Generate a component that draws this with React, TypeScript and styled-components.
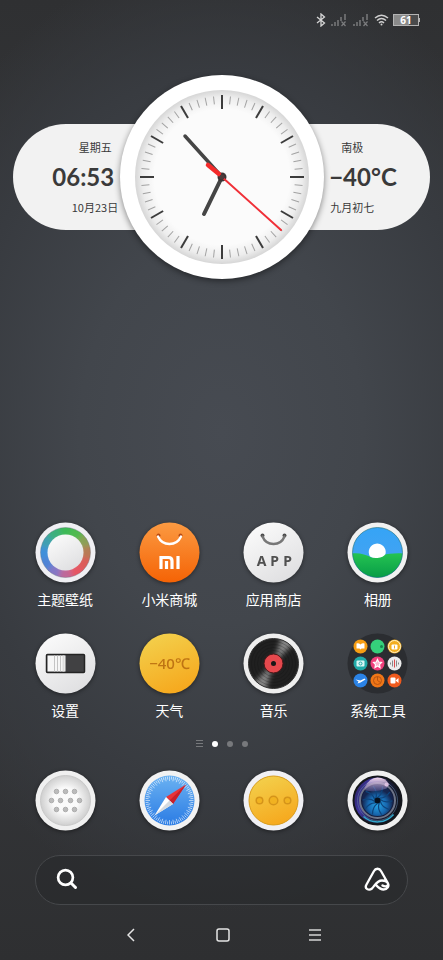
import React from 'react';
import styled, { createGlobalStyle } from 'styled-components';

const GlobalStyle = createGlobalStyle`
  * { box-sizing: border-box; }
  body {
    margin: 0;
    background: #2f3032;
    font-family: 'Noto Sans CJK SC', 'Noto Sans', sans-serif;
    color: #fff;
  }
  button, input { font: inherit; color: inherit; border: 0; padding: 0; margin: 0; background: none; }
  button { cursor: pointer; }
  svg { display: block; }
`;

const Screen = styled.main`
  min-height: 100vh;
  display: flex;
  flex-direction: column;
  background:
    radial-gradient(ellipse 80% 50% at 50% 45%, #474b52 0%, #42464c 40%, #383b40 75%, rgba(48, 49, 51, 0) 100%),
    linear-gradient(#2f3032 0%, #35373a 30%, #37393d 60%, #2e2f31 100%);
`;

const StatusBar = styled.header`
  height: 40px;
  padding: 0 23px;
  display: flex;
  align-items: center;
  justify-content: flex-end;
  gap: 4px;
`;

const Battery = styled.div`
  display: flex;
  align-items: center;
`;

const BatteryBody = styled.div`
  width: 26px;
  height: 12px;
  border: 1px solid #b4b4b4;
  background: linear-gradient(90deg, #8a8a8a 61%, #4a4b4c 61%);
  font: 700 10px/10px 'Open Sans', sans-serif;
  text-align: center;
`;

const BatteryTip = styled.div`
  width: 1px;
  height: 4px;
  background: #b4b4b4;
`;

const ClockWidget = styled.section`
  margin: 35px 13px 0;
  display: grid;
  align-items: center;
  justify-items: center;
  & > * { grid-area: 1 / 1; }
`;

const Pill = styled.div`
  width: 100%;
  height: 106px;
  padding-left: 6px;
  border-radius: 53px;
  background: #f2f2f2;
  color: #3a3a3a;
  display: flex;
  justify-content: center;
  gap: 211px;
`;

const Info = styled.div<{ $side: 'left' | 'right' }>`
  flex: 0 0 70px;
  display: flex;
  flex-direction: column;
  justify-content: center;
  align-items: ${p => (p.$side === 'left' ? 'flex-end' : 'flex-start')};
`;

const InfoSmall = styled.div`
  min-width: 46px;
  font-size: 11px;
  line-height: 18px;
  text-align: center;
  white-space: nowrap;
`;

const InfoBig = styled.div`
  padding-right: 4px;
  font: 700 24px/42px Lato, sans-serif;
  white-space: nowrap;
`;

const ClockFace = styled.svg`
  width: 204px;
  height: 204px;
  margin-left: 1px;
  overflow: visible;
  filter: drop-shadow(0 2px 3px rgba(0, 0, 0, 0.45));
`;

const Spacer = styled.div`
  flex: 1 0 24px;
`;

const AppGrid = styled.nav`
  padding: 0 13px;
  display: grid;
  grid-template-columns: repeat(4, 1fr);
  row-gap: 23px;
`;

const AppButton = styled.button`
  display: flex;
  flex-direction: column;
  align-items: center;
  gap: 5px;
  font-size: 14px;
  line-height: 22px;
`;

const IconArt = styled.svg<{ $flat?: boolean }>`
  width: 61px;
  height: 61px;
  overflow: visible;
  filter: ${p => (p.$flat ? 'none' : 'drop-shadow(0 1px 2px rgba(0, 0, 0, 0.45))')};
`;

const HiddenDefs = styled.svg`
  width: 0;
  height: 0;
`;

const Pager = styled.div`
  height: 49px;
  padding-bottom: 4px;
  display: flex;
  align-items: center;
  justify-content: center;
  gap: 9px;
`;

const PageDot = styled.button<{ $active?: boolean }>`
  width: 6px;
  height: 6px;
  border-radius: 50%;
  background: ${p => (p.$active ? '#fff' : '#77797c')};
`;

const PageList = styled.button`
  width: 7px;
  height: 7px;
`;

const SearchBar = styled.form`
  margin: 24px 35px 5px;
  height: 50px;
  padding: 0 19px 2px;
  border: 1px solid #46484b;
  border-radius: 25px;
  background: rgba(38, 39, 42, 0.5);
  display: flex;
  align-items: center;
  gap: 12px;
`;

const SearchInput = styled.input`
  flex: 1;
  min-width: 0;
  height: 32px;
  font-size: 14px;
  outline: none;
`;

const SystemNav = styled.nav`
  height: 50px;
  padding-left: 2px;
  display: flex;
  align-items: center;
  justify-content: center;
  gap: 68px;
`;

const NavButton = styled.button`
  width: 24px;
  height: 24px;
  display: grid;
  place-items: center;
`;

const range = (n: number) => Array.from({ length: n }, (_, i) => i);

function Signal() {
  return (
    <svg width="18" height="14" viewBox="0 0 18 14" aria-hidden="true">
      <g fill="#67686a">
        <rect x="1" y="11" width="2" height="2" />
        <rect x="4" y="9" width="2" height="4" />
        <rect x="7" y="7" width="2" height="6" />
        <rect x="10" y="4" width="2" height="4" />
        <rect x="14" y="1" width="2" height="6" />
      </g>
      <path d="M11.5 8.5l4 4.5m0-4.5l-4 4.5" stroke="#7b7c7e" strokeWidth="1.2" />
    </svg>
  );
}

function Clock() {
  return (
    <ClockFace viewBox="-102 -102 204 204" role="img" aria-label="06:53">
      <defs>
        <radialGradient id="face">
          <stop offset="0.78" stopColor="#fbfbfb" />
          <stop offset="0.92" stopColor="#ededed" />
          <stop offset="1" stopColor="#d6d6d6" />
        </radialGradient>
      </defs>
      <circle r="102" fill="#fff" />
      <circle r="87" fill="url(#face)" />
      {range(60).map(i => (
        <line
          key={i}
          y1={i % 5 ? -81 : -82}
          y2={i % 5 ? -73 : -68}
          stroke={i % 5 ? '#a2a2a2' : '#3c3c3c'}
          strokeWidth={i % 5 ? 1 : 2}
          transform={`rotate(${i * 6})`}
        />
      ))}
      <g strokeLinecap="round" stroke="#454545">
        <line x2="-18" y2="37" strokeWidth="4" />
        <line x2="-37" y2="-41" strokeWidth="3.5" />
      </g>
      <circle r="4.5" fill="#3b3535" />
      <path d="M59 53L0 0" stroke="#f03038" strokeWidth="2" strokeLinecap="round" />
      <path d="M-3-3L-14-12" stroke="#f32a2a" strokeWidth="4.5" strokeLinecap="round" />
      <circle r="2.5" fill="#4c3b3b" />
    </ClockFace>
  );
}

function Gradients() {
  return (
    <HiddenDefs aria-hidden="true">
      <defs>
        <linearGradient id="silver" x1="0.2" y1="0" x2="0.8" y2="1">
          <stop stopColor="#fbfbfb" />
          <stop offset="1" stopColor="#dedee0" />
        </linearGradient>
        <linearGradient id="orange" x2="0" y2="1">
          <stop stopColor="#fb9a42" />
          <stop offset="1" stopColor="#f56305" />
        </linearGradient>
        <linearGradient id="yellow" x1="0.3" y1="0" x2="0.7" y2="1">
          <stop stopColor="#f3cf4b" />
          <stop offset="1" stopColor="#f6a71c" />
        </linearGradient>
        <linearGradient id="sky" x2="0" y2="1">
          <stop stopColor="#35a4f6" />
          <stop offset="1" stopColor="#4aa2f0" />
        </linearGradient>
        <linearGradient id="grass" x2="0" y2="1">
          <stop stopColor="#25c352" />
          <stop offset="1" stopColor="#069b46" />
        </linearGradient>
        <linearGradient id="compass" x2="0" y2="1">
          <stop stopColor="#6bb2f2" />
          <stop offset="1" stopColor="#2a7be4" />
        </linearGradient>
        <radialGradient id="dial">
          <stop offset="0.5" stopColor="#fafafa" />
          <stop offset="1" stopColor="#cfcfcf" />
        </radialGradient>
        <radialGradient id="lens" cy="0.65">
          <stop stopColor="#25a5e6" />
          <stop offset="0.6" stopColor="#1767ae" />
          <stop offset="1" stopColor="#15254f" />
        </radialGradient>
        <linearGradient id="glare" x2="0" y2="1">
          <stop stopColor="#f8dcec" />
          <stop offset="1" stopColor="#9a83c8" stopOpacity="0.3" />
        </linearGradient>
        <linearGradient id="rim" x1="0" y1="0.3" x2="1" y2="0.7">
          <stop stopColor="#2d2568" />
          <stop offset="0.25" stopColor="#3f35a0" />
          <stop offset="0.55" stopColor="#1a1d38" />
          <stop offset="1" stopColor="#101318" />
        </linearGradient>
        <filter id="soft" x="-0.3" y="-0.3" width="1.6" height="1.6">
          <feGaussianBlur stdDeviation="2.5" />
        </filter>
        <clipPath id="disc"><circle r="25" /></clipPath>
      </defs>
    </HiddenDefs>
  );
}

const Base = ({ fill = 'url(#silver)' }: { fill?: string }) => <circle r="30" fill={fill} />;

const hues = ['#3cba57', '#4fba4f', '#8aa056', '#b87a55', '#dc5c5a', '#e65763', '#c06898', '#8577c5', '#4f83d6', '#4190da', '#3fa0b0', '#3cb07b'];

const ThemeIcon = () => (
  <>
    <Base fill="#efeff3" />
    <g clipPath="url(#disc)">
      <g filter="url(#soft)">
        {hues.map((c, i) => (
          <path key={c} d="M-6.2-22.2A23 23 0 0 1 6.2-22.2" transform={`rotate(${i * 30})`} fill="none" stroke={c} strokeWidth="18" />
        ))}
      </g>
    </g>
    <circle r="25" fill="none" stroke="#5c6b76" strokeOpacity="0.35" />
    <circle r="18" fill="url(#silver)" />
  </>
);

const MiIcon = () => (
  <>
    <Base fill="url(#orange)" />
    <circle cx="-11" cy="-17" r="2" fill="#b94b12" />
    <circle cx="11" cy="-17" r="2" fill="#b94b12" />
    <path d="M-11.5-16C-7-6 7-6 11.5-16" fill="none" stroke="#fff" strokeWidth="2.4" strokeLinecap="round" />
    <path d="M-8.5 16.500V5H-1Q2.500 5 2.500 8.500V16.500M-3 8.500V16.500M8.500 3.500V16.500" fill="none" stroke="#fff" strokeWidth="3.2" />
  </>
);

const StoreIcon = () => (
  <>
    <Base />
    <circle cx="-11" cy="-17" r="2" fill="#4c4c4c" />
    <circle cx="11" cy="-17" r="2" fill="#4c4c4c" />
    <path d="M-11-16C-7-6 7-6 11-16" fill="none" stroke="#777" strokeWidth="2.4" strokeLinecap="round" />
    <g fontFamily="Noto Sans, sans-serif" fontWeight="700" fontSize="14" fill="#505050" textAnchor="middle">
      <text x="-12" y="13">A</text>
      <text x="1" y="13">P</text>
      <text x="14" y="13">P</text>
    </g>
  </>
);

const GalleryIcon = () => (
  <>
    <Base fill="#f1f1f1" />
    <g clipPath="url(#disc)">
      <rect x="-26" y="-26" width="52" height="52" fill="url(#sky)" />
      <path d="M-26 1C-18 0-12 2-6 5C2 4 10 0 26 1V26H-26Z" fill="url(#grass)" />
      <path d="M-7.500 4A8.500 8.500 0 1 1 8 1.500Q6 5 0 5.500Q-4 6-7.500 4Z" fill="#fff" />
    </g>
    <circle r="25" fill="none" stroke="#176d78" strokeOpacity="0.6" />
  </>
);

const SettingsIcon = () => (
  <>
    <Base />
    <rect x="-19" y="-9" width="38" height="18" rx="1" fill="#414143" stroke="#242424" strokeWidth="1.5" />
    <rect x="-18" y="-8" width="18" height="16" fill="#f6f6f6" />
    <path d="M-11-8V8M-8-8V8M-5-8V8" stroke="#c4c4c4" />
    <path d="M-2-8V8" stroke="#ddd" strokeWidth="2" />
  </>
);

const WeatherIcon = () => (
  <>
    <Base fill="url(#yellow)" />
    <text x="0" y="5" textAnchor="middle" fontFamily="Noto Sans, Noto Sans CJK SC, sans-serif" fontWeight="500" fontSize="15" fill="#bf7413">−40℃</text>
  </>
);

const MusicIcon = () => (
  <>
    <Base fill="#eee" />
    <circle r="25" fill="#202020" />
    <g clipPath="url(#disc)">
      <g filter="url(#soft)">
        <path d="M0 0L8-28L22-22ZM0 0L-8 28L-22 22Z" fill="#858585" />
      </g>
    </g>
    <g fill="none" stroke="#111" strokeOpacity="0.25">
      <circle r="22" /><circle r="19" /><circle r="16" /><circle r="13" />
    </g>
    <circle r="25" fill="none" stroke="#333" />
    <circle r="9.5" fill="#e5484d" stroke="#4d1719" />
    <circle r="2.5" fill="#171717" />
  </>
);

const folderColors = ['#f59d13', '#35d07b', '#f3ae20', '#20aaa8', '#ef3f7b', '#ececec', '#2b83e6', '#ef7617', '#ef5a1d'];

const FolderIcon = () => (
  <>
    <circle r="30" fill="#2b2d31" />
    {folderColors.map((c, i) => (
      <circle key={c} cx={((i % 3) - 1) * 17} cy={(Math.floor(i / 3) - 1) * 17} r="7" fill={c} />
    ))}
    <path d="M-21-20Q-19-21-17-19Q-15-21-13-20V-15H-16L-17-14L-18-15H-21Z" fill="#fff" />
    <circle cx="4" cy="-17" r="1.5" fill="#15864e" />
    <circle cx="17" cy="-17" r="6" fill="none" stroke="#fff3cc" />
    <rect x="14" y="-19" width="6" height="5" rx="1" fill="#fff" />
    <path d="M17-18V-15" stroke="#f3ae20" />
    <rect x="-21" y="-3" width="8" height="6" rx="1" fill="#d9f7f5" />
    <circle cx="-17" r="1.5" fill="none" stroke="#20aaa8" />
    <path d="M0-4L1.2-1.5L4-1L2 1L2.5 4L0 2.5L-2.5 4L-2 1L-4-1L-1.2-1.5Z" fill="#fcb5cf" stroke="#fff" strokeWidth="1.2" />
    <path d="M13-1V1M15-3V3M19-3V3M21-1V1" stroke="#888" />
    <path d="M17-4V4" stroke="#dc4c4c" />
    <path d="M-22 16L-17 17L-13 15L-12 16L-17 19L-20 20L-19 18Z" fill="#fff" />
    <circle cy="17" r="4" fill="none" stroke="#b85413" />
    <path d="M0 13V17L3 19" fill="none" stroke="#b85413" />
    <rect x="13" y="14" width="5" height="6" rx="1" fill="#fff" />
    <path d="M18 17L21 14.5V19.5Z" fill="#fff" />
  </>
);

const dialDots = [
  [-9, -9], [0, -9], [9, -9], [-14, 0], [-5, 0], [5, 0], [14, 0], [-9, 9], [0, 9], [9, 9],
];

const PhoneIcon = () => (
  <>
    <Base fill="#f0f0f0" />
    <circle r="25" fill="url(#dial)" stroke="#c9c9c9" />
    {dialDots.map(([x, y]) => (
      <circle key={`${x},${y}`} cx={x} cy={y} r="2.3" fill="#bbb" stroke="#a3a3a3" strokeWidth="0.8" />
    ))}
  </>
);

const BrowserIcon = () => (
  <>
    <Base fill="#f2f2f2" />
    <circle r="25" fill="url(#compass)" />
    {range(72).map(i => (
      <line key={i} y1="-24" y2={i % 2 ? -21 : -19.5} stroke="#fff" strokeOpacity="0.7" strokeWidth="0.8" transform={`rotate(${i * 5})`} />
    ))}
    <path d="M16.500-16L3.500 3.500L-3.500-3.500Z" fill="#e8343a" />
    <path d="M16.500-16L3.500 3.500L0 0Z" fill="#c8202b" />
    <path d="M-15 15L3.500 3.500L-3.500-3.500Z" fill="#fff" />
    <path d="M-15 15L3.500 3.500L0 0Z" fill="#d5dae0" />
  </>
);

const MessageIcon = () => (
  <>
    <Base fill="#f0f0f4" />
    <circle r="24.5" fill="url(#yellow)" stroke="#d99c1c" />
    <g fill="#f1b221" stroke="#d5941a" strokeWidth="1.5">
      <circle cx="-14" r="3.3" /><circle r="4.3" /><circle cx="14" r="3.3" />
    </g>
  </>
);

const CameraIcon = () => (
  <>
    <Base fill="#efefef" />
    <circle r="24" fill="url(#rim)" stroke="#15171c" strokeWidth="2" />
    <circle r="20" fill="none" stroke="#5d7ba0" strokeOpacity="0.6" />
    <path d="M-14 16A21 21 0 0 0 16 14" fill="none" stroke="#31a8cc" strokeWidth="1.5" />
    <circle r="17.5" fill="#141d3d" stroke="#6d7488" strokeWidth="2" />
    <circle r="15.5" fill="url(#lens)" />
    {range(10).map(i => (
      <path key={i} d="M0-3Q5-6 5-14" fill="none" stroke="#0e447c" strokeWidth="1.2" transform={`rotate(${i * 36})`} />
    ))}
    <circle r="3" fill="#07101d" />
    <path d="M-13-13Q-8-23 0-23Q8-23 12-16L9-12Q0-8-12-10Z" fill="url(#glare)" />
    <circle cx="9" cy="-16" r="2" fill="#e8cbea" fillOpacity="0.8" />
  </>
);

type App = { name: string; art: React.ReactNode; folder?: boolean };

const apps: App[] = [
  { name: '主题壁纸', art: <ThemeIcon /> },
  { name: '小米商城', art: <MiIcon /> },
  { name: '应用商店', art: <StoreIcon /> },
  { name: '相册', art: <GalleryIcon /> },
  { name: '设置', art: <SettingsIcon /> },
  { name: '天气', art: <WeatherIcon /> },
  { name: '音乐', art: <MusicIcon /> },
  { name: '系统工具', art: <FolderIcon />, folder: true },
];

const dock: App[] = [
  { name: '电话', art: <PhoneIcon /> },
  { name: '浏览器', art: <BrowserIcon /> },
  { name: '短信', art: <MessageIcon /> },
  { name: '相机', art: <CameraIcon /> },
];

export default function Launcher() {
  return (
    <Screen>
      <GlobalStyle />
      <Gradients />
      <StatusBar>
        <svg width="10" height="14" viewBox="0 0 10 14" fill="none" stroke="#d5d5d5" strokeWidth="1.3" aria-hidden="true">
          <path d="M1 4L8.5 10L5 13V1L8.5 4L1 10" />
        </svg>
        <Signal />
        <Signal />
        <svg width="15" height="12" viewBox="0 0 15 12" fill="none" stroke="#d0d0d0" strokeWidth="1.5" aria-hidden="true">
          <path d="M1 4Q7.5-1.5 14 4M3 6.5Q7.5 2.5 12 6.5M5 9Q7.5 6.5 10 9" />
          <circle cx="7.5" cy="10.5" r="1" fill="#d0d0d0" stroke="none" />
        </svg>
        <Battery>
          <BatteryBody>61</BatteryBody>
          <BatteryTip />
        </Battery>
      </StatusBar>

      <ClockWidget>
        <Pill>
          <Info $side="left">
            <InfoSmall>星期五</InfoSmall>
            <InfoBig>06:53</InfoBig>
            <InfoSmall>10月23日</InfoSmall>
          </Info>
          <Info $side="right">
            <InfoSmall>南极</InfoSmall>
            <InfoBig>−40°C</InfoBig>
            <InfoSmall>九月初七</InfoSmall>
          </Info>
        </Pill>
        <Clock />
      </ClockWidget>

      <Spacer />

      <AppGrid aria-label="应用">
        {apps.map(a => (
          <AppButton key={a.name}>
            <IconArt $flat={a.folder} viewBox="-30.5 -30.5 61 61" aria-hidden="true">{a.art}</IconArt>
            {a.name}
          </AppButton>
        ))}
      </AppGrid>

      <Pager>
        <PageList aria-label="列表">
          <svg width="7" height="7" viewBox="0 0 7 7" stroke="#77797c" aria-hidden="true">
            <path d="M0 .5H7M0 3.5H7M0 6.5H7" />
          </svg>
        </PageList>
        <PageDot $active aria-label="第1页" />
        <PageDot aria-label="第2页" />
        <PageDot aria-label="第3页" />
      </Pager>

      <AppGrid aria-label="快捷栏">
        {dock.map(a => (
          <AppButton key={a.name} aria-label={a.name}>
            <IconArt viewBox="-30.5 -30.5 61 61" aria-hidden="true">{a.art}</IconArt>
          </AppButton>
        ))}
      </AppGrid>

      <SearchBar onSubmit={e => e.preventDefault()}>
        <NavButton type="submit" aria-label="搜索">
          <svg width="22" height="22" viewBox="0 0 22 22" fill="none" stroke="#fff" strokeLinecap="round" aria-hidden="true">
            <circle cx="9.5" cy="9.5" r="7.4" strokeWidth="2.7" />
            <path d="M15.5 15.5L19.5 19.5" strokeWidth="3" />
          </svg>
        </NavButton>
        <SearchInput type="search" aria-label="搜索内容" />
        <NavButton type="button" aria-label="小爱同学">
          <svg width="26" height="24" viewBox="0 0 26 24" fill="none" stroke="#fff" strokeWidth="2.3" strokeLinecap="round" strokeLinejoin="round" aria-hidden="true">
            <path d="M11.500 17.500C14 20 16 22.500 19.500 22.500C23.500 22.500 25.500 19 23.800 16L17 4C15.500 1 11.500 1 10 4L2.500 17.500C0 22 5 24 8 21.500C11 18.500 12.500 13.500 18 13.500C21 13.500 23 14.500 23.800 16C25 19 21.500 20.500 18.500 18.500" />
          </svg>
        </NavButton>
      </SearchBar>

      <SystemNav aria-label="系统导航">
        <NavButton aria-label="返回">
          <svg width="8" height="14" viewBox="0 0 8 14" fill="none" stroke="#e5e5e5" strokeWidth="1.5" aria-hidden="true">
            <path d="M7 1L1 7L7 13" />
          </svg>
        </NavButton>
        <NavButton aria-label="主页">
          <svg width="14" height="14" viewBox="0 0 14 14" fill="none" stroke="#e5e5e5" strokeWidth="1.5" aria-hidden="true">
            <rect x="1" y="1" width="12" height="12" rx="2" />
          </svg>
        </NavButton>
        <NavButton aria-label="菜单">
          <svg width="12" height="12" viewBox="0 0 12 12" stroke="#d5d5d5" strokeWidth="1.3" aria-hidden="true">
            <path d="M0 1H12M0 6H12M0 11H12" />
          </svg>
        </NavButton>
      </SystemNav>
    </Screen>
  );
}
